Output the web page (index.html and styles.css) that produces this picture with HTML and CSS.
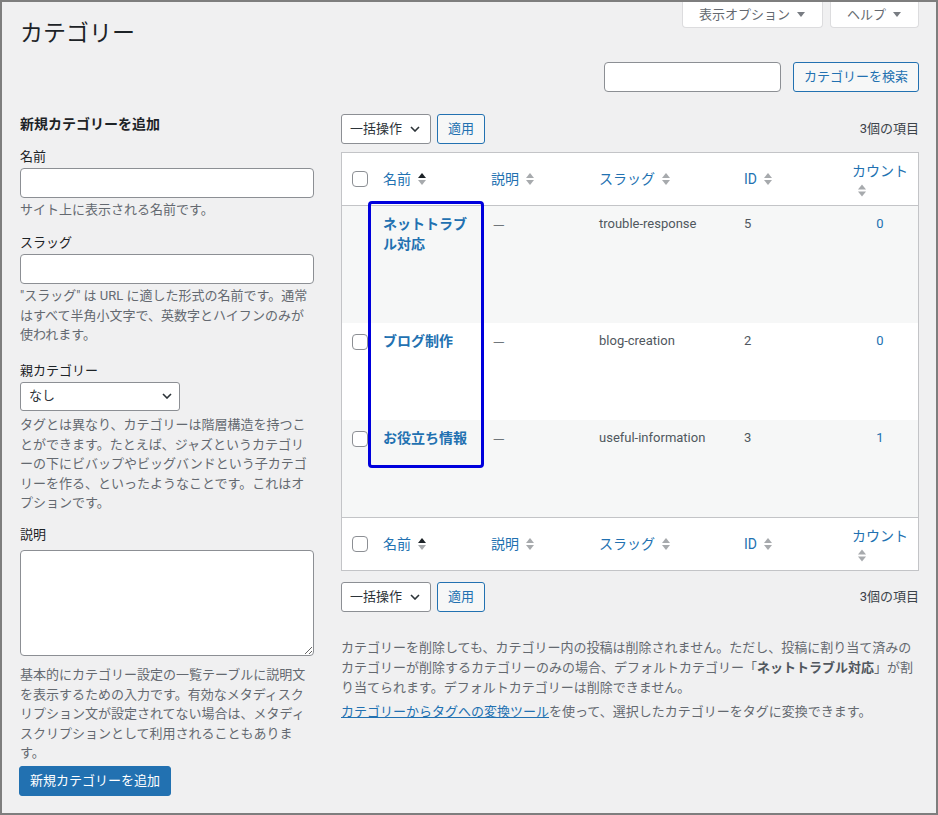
FILE: index.html
```html
<!DOCTYPE html>
<html lang="ja">
<head>
<meta charset="utf-8">
<title>カテゴリー</title>
<link rel="stylesheet" href="styles.css">
</head>
<body>
<div class="page">
  <header class="page-head">
    <h1 class="title">カテゴリー</h1>
    <div class="meta-links">
      <button type="button" class="meta-btn">表示オプション<span class="tri"></span></button>
      <button type="button" class="meta-btn">ヘルプ<span class="tri"></span></button>
    </div>
  </header>

  <form class="search-row">
    <input type="search" class="search-input" aria-label="カテゴリーを検索">
    <button type="button" class="btn">カテゴリーを検索</button>
  </form>

  <div class="cols">
    <section class="col-left">
      <h2 class="form-title">新規カテゴリーを追加</h2>

      <div class="field f-name">
        <label class="lbl">名前</label>
        <input type="text" class="text-input">
        <p class="help">サイト上に表示される名前です。</p>
      </div>

      <div class="field f-slug">
        <label class="lbl">スラッグ</label>
        <input type="text" class="text-input">
        <p class="help">"スラッグ" は URL に適した形式の名前です。通常はすべて半角小文字で、英数字とハイフンのみが使われます。</p>
      </div>

      <div class="field f-parent">
        <label class="lbl">親カテゴリー</label>
        <div class="select select-parent"><span>なし</span><svg class="chev" width="10" height="6" viewBox="0 0 10 6"><polyline points="1,1 5,5 9,1" fill="none" stroke="#2c3338" stroke-width="1.6"/></svg></div>
        <p class="help help-parent">タグとは異なり、カテゴリーは階層構造を持つことができます。たとえば、ジャズというカテゴリーの下にビバップやビッグバンドという子カテゴリーを作る、といったようなことです。これはオプションです。</p>
      </div>

      <div class="field f-desc">
        <label class="lbl lbl-desc">説明</label>
        <textarea class="textarea"></textarea>
        <p class="help help-desc">基本的にカテゴリー設定の一覧テーブルに説明文を表示するための入力です。有効なメタディスクリプション文が設定されてない場合は、メタディスクリプションとして利用されることもあります。</p>
      </div>

      <button type="button" class="btn-primary">新規カテゴリーを追加</button>
    </section>

    <section class="col-right">
      <div class="tablenav">
        <div class="select select-bulk"><span>一括操作</span><svg class="chev" width="10" height="6" viewBox="0 0 10 6"><polyline points="1,1 5,5 9,1" fill="none" stroke="#2c3338" stroke-width="1.6"/></svg></div>
        <button type="button" class="btn btn-apply">適用</button>
        <span class="count-items">3個の項目</span>
      </div>

      <div class="table-wrap">
        <table class="list">
          <colgroup>
            <col class="c-check"><col class="c-name"><col class="c-desc"><col class="c-slug"><col class="c-id"><col class="c-count">
          </colgroup>
          <thead>
            <tr>
              <td class="check-col"><input type="checkbox" class="cb"></td>
              <th><a class="sort-link">名前<svg class="sort" width="8" height="12" viewBox="0 0 8 12"><polygon points="4,0 8,5 0,5" fill="#1d2327"/><polygon points="0,7 8,7 4,12" fill="#a7aaad"/></svg></a></th>
              <th><a class="sort-link">説明<svg class="sort" width="8" height="12" viewBox="0 0 8 12"><polygon points="4,0 8,5 0,5" fill="#a7aaad"/><polygon points="0,7 8,7 4,12" fill="#a7aaad"/></svg></a></th>
              <th><a class="sort-link">スラッグ<svg class="sort" width="8" height="12" viewBox="0 0 8 12"><polygon points="4,0 8,5 0,5" fill="#a7aaad"/><polygon points="0,7 8,7 4,12" fill="#a7aaad"/></svg></a></th>
              <th><a class="sort-link">ID<svg class="sort" width="8" height="12" viewBox="0 0 8 12"><polygon points="4,0 8,5 0,5" fill="#a7aaad"/><polygon points="0,7 8,7 4,12" fill="#a7aaad"/></svg></a></th>
              <th class="count-th"><a class="sort-link">カウント</a><svg class="sort sort-block" width="8" height="12" viewBox="0 0 8 12"><polygon points="4,0 8,5 0,5" fill="#a7aaad"/><polygon points="0,7 8,7 4,12" fill="#a7aaad"/></svg></th>
            </tr>
          </thead>
          <tbody>
            <tr class="alt">
              <td class="check-col"></td>
              <td class="name-col"><a class="row-title">ネットトラブル対応</a><div class="row-actions"></div></td>
              <td><span class="dash">—</span></td>
              <td>trouble-response</td>
              <td>5</td>
              <td class="num"><a class="num-link">0</a></td>
            </tr>
            <tr>
              <td class="check-col"><input type="checkbox" class="cb"></td>
              <td class="name-col"><a class="row-title">ブログ制作</a><div class="row-actions"></div></td>
              <td><span class="dash">—</span></td>
              <td>blog-creation</td>
              <td>2</td>
              <td class="num"><a class="num-link">0</a></td>
            </tr>
            <tr class="alt">
              <td class="check-col"><input type="checkbox" class="cb"></td>
              <td class="name-col"><a class="row-title">お役立ち情報</a><div class="row-actions"></div></td>
              <td><span class="dash">—</span></td>
              <td>useful-information</td>
              <td>3</td>
              <td class="num"><a class="num-link">1</a></td>
            </tr>
          </tbody>
          <tfoot>
            <tr>
              <td class="check-col"><input type="checkbox" class="cb"></td>
              <th><a class="sort-link">名前<svg class="sort" width="8" height="12" viewBox="0 0 8 12"><polygon points="4,0 8,5 0,5" fill="#1d2327"/><polygon points="0,7 8,7 4,12" fill="#a7aaad"/></svg></a></th>
              <th><a class="sort-link">説明<svg class="sort" width="8" height="12" viewBox="0 0 8 12"><polygon points="4,0 8,5 0,5" fill="#a7aaad"/><polygon points="0,7 8,7 4,12" fill="#a7aaad"/></svg></a></th>
              <th><a class="sort-link">スラッグ<svg class="sort" width="8" height="12" viewBox="0 0 8 12"><polygon points="4,0 8,5 0,5" fill="#a7aaad"/><polygon points="0,7 8,7 4,12" fill="#a7aaad"/></svg></a></th>
              <th><a class="sort-link">ID<svg class="sort" width="8" height="12" viewBox="0 0 8 12"><polygon points="4,0 8,5 0,5" fill="#a7aaad"/><polygon points="0,7 8,7 4,12" fill="#a7aaad"/></svg></a></th>
              <th class="count-th"><a class="sort-link">カウント</a><svg class="sort sort-block" width="8" height="12" viewBox="0 0 8 12"><polygon points="4,0 8,5 0,5" fill="#a7aaad"/><polygon points="0,7 8,7 4,12" fill="#a7aaad"/></svg></th>
            </tr>
          </tfoot>
        </table>
        <div class="highlight"></div>
      </div>

      <div class="tablenav tablenav-bottom">
        <div class="select select-bulk"><span>一括操作</span><svg class="chev" width="10" height="6" viewBox="0 0 10 6"><polyline points="1,1 5,5 9,1" fill="none" stroke="#2c3338" stroke-width="1.6"/></svg></div>
        <button type="button" class="btn btn-apply">適用</button>
        <span class="count-items">3個の項目</span>
      </div>

      <div class="notes">
        <p><span>カテゴリーを削除しても、カテゴリー内の投稿は削除されません。ただし、投稿に割り当て済みの</span><span>カテゴリーが削除するカテゴリーのみの場合、デフォルトカテゴリー「</span><strong>ネットトラブル対応</strong><span>」が割</span><span>り当てられます。デフォルトカテゴリーは削除できません。</span></p>
        <p class="note-link"><a class="link">カテゴリーからタグへの変換ツール</a>を使って、選択したカテゴリーをタグに変換できます。</p>
      </div>
    </section>
  </div>
</div>
</body>
</html>
```

FILE: styles.css
```css
* { box-sizing: border-box; }

html, body {
  margin: 0;
  padding: 0;
}

body {
  background: #f0f0f1;
  font-family: Roboto, "Noto Sans CJK JP", sans-serif;
  font-size: 13px;
  line-height: 1.5;
  color: #3c434a;
  line-break: normal;
  text-spacing-trim: space-all;
}

.page {
  width: 938px;
  height: 815px;
  border: 2px solid #7e7e7e;
  padding: 0 17px 0 18px;
  overflow: hidden;
}

/* header */
.page-head {
  display: flex;
  justify-content: space-between;
  align-items: flex-start;
}

.title {
  margin: 17px 0 0;
  font-size: 23px;
  line-height: 30px;
  font-weight: 400;
  color: #1d2327;
}

.meta-links {
  display: flex;
  gap: 7px;
}

.meta-btn {
  display: flex;
  align-items: center;
  gap: 7px;
  height: 26px;
  padding: 0 17px 0 16px;
  background: #fff;
  border: 1px solid #dcdcde;
  border-top: 0;
  border-radius: 0 0 4px 4px;
  font: inherit;
  font-size: 13px;
  color: #646970;
}

.tri {
  width: 0;
  height: 0;
  border-left: 4px solid transparent;
  border-right: 4px solid transparent;
  border-top: 5px solid #787c82;
}

/* search */
.search-row {
  display: flex;
  justify-content: flex-end;
  gap: 12px;
  margin: 13px 0 0;
}

.search-input {
  width: 177px;
  height: 30px;
  margin: 0;
  padding: 0 8px;
  border: 1px solid #8c8f94;
  border-radius: 4px;
  background: #fff;
  font: inherit;
}

.btn {
  height: 30px;
  margin: 0;
  padding: 0 10px;
  border: 1px solid #2271b1;
  border-radius: 3px;
  background: #f6f7f7;
  color: #2271b1;
  font: inherit;
  font-size: 13px;
  line-height: 28px;
}

/* columns */
.cols {
  display: grid;
  grid-template-columns: 294px 578px;
  column-gap: 27px;
  margin-top: 22px;
}

/* left form */
.form-title {
  margin: 0;
  font-size: 14px;
  line-height: 20px;
  font-weight: 700;
  color: #1d2327;
}

.lbl {
  display: block;
  line-height: 20px;
  color: #1d2327;
  margin-bottom: 1px;
}

.f-name { margin-top: 13px; }
.f-slug { margin-top: 13.5px; }
.f-parent { margin-top: 16px; }
.f-desc { margin-top: 12px; }

.text-input {
  display: block;
  width: 100%;
  height: 30px;
  margin: 0;
  padding: 0 8px;
  border: 1px solid #8c8f94;
  border-radius: 4px;
  background: #fff;
  font: inherit;
}

.help {
  margin: 2px 0 0;
  line-height: 19.5px;
  color: #646970;
}

.help-parent { margin-top: 4.5px; }
.help-desc { margin-top: 9.5px; }

.select {
  display: flex;
  align-items: center;
  justify-content: space-between;
  height: 30px;
  border: 1px solid #8c8f94;
  border-radius: 3px;
  background: #fff;
  color: #2c3338;
  font-size: 13px;
}

.select-parent {
  width: 160px;
  height: 29px;
  padding: 0 7px 0 8px;
}

.select-bulk {
  width: 90px;
  padding: 0 10px 0 8px;
}

.chev { display: block; flex: none; }

.lbl-desc { margin-bottom: 5px; }

.textarea {
  display: block;
  width: 100%;
  height: 106px;
  margin: 0;
  padding: 4px 8px;
  border: 1px solid #8c8f94;
  border-radius: 4px;
  background: #fff;
  font: inherit;
  resize: vertical;
}

.btn-primary {
  display: block;
  height: 30px;
  margin: 3px 0 0 -1px;
  padding: 0 10px;
  border: 1px solid #2271b1;
  border-radius: 3px;
  background: #2271b1;
  color: #fff;
  font: inherit;
  font-size: 13px;
}

/* right column */
.tablenav {
  display: flex;
  align-items: center;
  gap: 6px;
  height: 30px;
}

.btn-apply {
  width: 48px;
  padding: 0;
  text-align: center;
}

.count-items {
  margin-left: auto;
  color: #3c434a;
}

.tablenav-bottom { margin-top: 11px; }

.table-wrap {
  position: relative;
  margin-top: 8px;
}

.list {
  width: 578px;
  table-layout: fixed;
  border-collapse: separate;
  border-spacing: 0;
  border: 1px solid #c3c4c7;
  background: #fff;
}

.c-check { width: 31px; }
.c-name { width: 108px; }
.c-desc { width: 108px; }
.c-slug { width: 145px; }
.c-id { width: 108px; }

.list th,
.list td {
  padding: 8px 10px;
  text-align: left;
  font-weight: 400;
}

.list thead th,
.list thead td {
  vertical-align: middle;
  border-bottom: 1px solid #c3c4c7;
}

.list tfoot th,
.list tfoot td {
  vertical-align: middle;
  border-top: 1px solid #c3c4c7;
}

.list .check-col {
  padding: 0 0 0 10px;
}

.list tbody .check-col {
  padding-top: 11px;
  vertical-align: top;
}

.cb {
  display: block;
  appearance: none;
  -webkit-appearance: none;
  width: 16px;
  height: 16px;
  margin: 0;
  border: 1px solid #8c8f94;
  border-radius: 4px;
  background: #fff;
}

.sort-link {
  color: #2271b1;
  font-size: 14px;
  line-height: 20px;
  text-decoration: none;
  white-space: nowrap;
}

.sort {
  display: inline-block;
  margin-left: 7px;
  vertical-align: -1px;
}

.list .count-th {
  vertical-align: top;
  padding: 8px 9px 8px 10px;
}

.count-th .sort-link {
  display: block;
}

.sort-block {
  display: block;
  margin: 3px 0 0 6px;
  height: 13px;
}

.list tbody td {
  vertical-align: top;
  line-height: 20px;
  color: #50575e;
}

.list tbody tr.alt td {
  background: #f6f7f7;
}

.dash {
  display: inline-block;
  margin-left: 2px;
  font-family: "Noto Sans CJK JP", sans-serif;
  color: #50575e;
}

.row-title {
  display: block;
  color: #2271b1;
  font-size: 14px;
  font-weight: 700;
  line-height: 20px;
}

.row-actions {
  height: 61px;
}

.list td.num {
  text-align: center;
}

.num-link {
  color: #2271b1;
}

.highlight {
  position: absolute;
  left: 27px;
  top: 49px;
  width: 116px;
  height: 267px;
  border: 3px solid #0000dd;
  border-radius: 4px;
  pointer-events: none;
}

/* notes */
.notes {
  margin-top: 26px;
  color: #646970;
}

.notes p {
  margin: 0;
  line-height: 20px;
}

.notes strong {
  font-weight: 700;
  color: #50575e;
}

.notes .note-link {
  margin-top: 4px;
}

.link {
  color: #2271b1;
  text-decoration: underline;
}
```
